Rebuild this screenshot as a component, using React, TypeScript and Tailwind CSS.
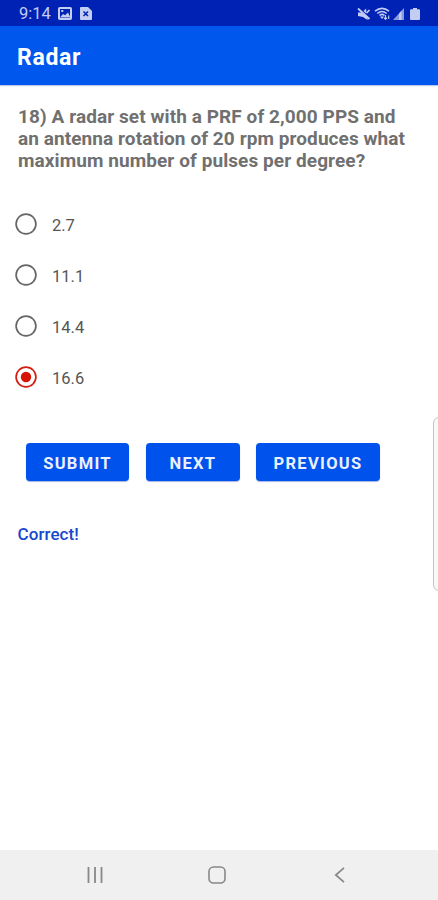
const options = ["2.7", "11.1", "14.4", "16.6"];

function StatusBar() {
  return (
    <div className="flex h-[26px] items-center bg-[#0022b4] pl-[19px] pr-[18px] pt-[1px] text-[#c3cdf3]">
      <span className="w-[39px] text-[16.500px] leading-[26px]">9:14</span>
      <svg className="h-[13px] w-[14px]" viewBox="0 0 14 13" fill="none">
        <rect x="1" y="1" width="12" height="11" rx="0.8" stroke="currentColor" strokeWidth="2" />
        <path d="M2 10.500l3-3.500 2 1.200L10 5.500l2.500 5z" fill="currentColor" />
        <rect x="3.300" y="3" width="2" height="2" fill="currentColor" />
      </svg>
      <svg className="ml-[7.500px] h-[13px] w-[12px]" viewBox="0 0 12 13" fill="none">
        <path d="M1 0h7l4 4v8a1 1 0 0 1-1 1H1a1 1 0 0 1-1-1V1a1 1 0 0 1 1-1z" fill="currentColor" />
        <path d="M3.500 4.500l4.500 4.500M8 4.500L3.500 9" stroke="#0022b4" strokeWidth="1.500" />
      </svg>
      <div className="ml-auto flex items-center">
        <svg className="h-[14px] w-[14px]" viewBox="0 0 14 14" fill="none">
          <path d="M1 5.500h3L10.500 10v3L6 10 1 9z" fill="currentColor" />
          <path d="M6.500 4l2.700-2.500V6.500z" fill="currentColor" />
          <path d="M1 1.500l11.500 10.500M9.500 6L12.500 3" stroke="currentColor" strokeWidth="1.700" />
        </svg>
        <svg className="ml-[3px] h-[14px] w-[17px]" viewBox="0 0 17 14" fill="none" stroke="currentColor">
          <path d="M1 4.200Q8 -1.600 15 4.200M3.300 6.500Q8 2.500 12.700 6.500M5.500 8.500Q8 6.300 10.500 8.500" strokeWidth="1.600" />
          <path d="M6 9.500h4l-2 2.500z" fill="currentColor" stroke="none" />
          <path d="M11.500 8v4M10 10.700l1.500 1.700 1.500-1.700M14.700 12V8.500" strokeWidth="1.100" />
        </svg>
        <svg className="ml-[2px] h-[12px] w-[11px]" viewBox="0 0 11 12">
          <path d="M0 12L11 0v12z" fill="currentColor" opacity="0.700" />
          <path d="M6 12V5.500L8.500 2.700V12z" fill="currentColor" />
        </svg>
        <svg className="ml-[6px] h-[12px] w-[10px]" viewBox="0 0 10 12" fill="currentColor">
          <path d="M3 0h4v1.200h2q1 0 1 1V11q0 1-1 1H1q-1 0-1-1V2.200q0-1 1-1h2z" />
        </svg>
      </div>
    </div>
  );
}

function Option({ label, checked }: { label: string; checked: boolean }) {
  return (
    <label className="flex h-[51px] items-center gap-[15px]">
      <svg className="size-[22px]" viewBox="0 0 22 22" fill="none">
        <circle cx="11" cy="11" r="9.900" stroke={checked ? "#d51b12" : "#666"} strokeWidth="1.700" />
        {checked && <circle cx="11" cy="11" r="5.200" fill="#d81405" />}
      </svg>
      <span className="pt-[3px] text-[16.500px] leading-[22px] text-[#555]">{label}</span>
    </label>
  );
}

const buttonStyle =
  "h-[38px] rounded-[4px] bg-[#0052ec] pt-[4px] text-[16.500px] font-bold tracking-[1.300px] text-[#eaf0ff] shadow-[0_1px_1px_rgba(0,40,180,0.350)]";

export default function App() {
  return (
    <div className="relative flex h-[900px] w-[438px] flex-col overflow-hidden bg-white font-['Roboto','Liberation_Sans',sans-serif]">
      <StatusBar />
      <header className="flex h-[59px] items-center bg-[#0057ee] pl-[17px] pt-[5px] text-[23px] font-bold tracking-[0.700px] text-white shadow-[0_1px_1px_rgba(0,40,160,0.250)]">
        Radar
      </header>
      <main className="flex-1">
        <p className="whitespace-nowrap pl-[18px] pt-[21px] text-[19px] font-bold leading-[22px] tracking-[0.080px] text-[#707070]">
          18) A radar set with a PRF of 2,000 PPS and
          <br />
          an antenna rotation of 20 rpm produces what
          <br />
          maximum number of pulses per degree?
        </p>
        <div className="pl-[15px] pt-[26.500px]">
          {options.map((label) => (
            <Option key={label} label={label} checked={label === "16.6"} />
          ))}
        </div>
        <div className="flex pl-[26px] pt-[40.500px]">
          <button className={`${buttonStyle} w-[103px]`}>SUBMIT</button>
          <button className={`${buttonStyle} ml-[17px] w-[94px]`}>NEXT</button>
          <button className={`${buttonStyle} ml-[16px] w-[124px]`}>PREVIOUS</button>
        </div>
        <p className="pl-[17.500px] pt-[42px] text-[17px] font-medium leading-[22px] tracking-[0.080px] text-[#1748cb]">Correct!</p>
      </main>
      <div className="absolute left-[433px] top-[417px] h-[174px] w-[12px] rounded-[7px] border border-[#c4c4c4] bg-[#f8f8f8]" />
      <nav className="flex h-[50px] items-center bg-[#f0f0f0] text-[#888]">
        <svg className="ml-[87px] h-[16px] w-[16px]" viewBox="0 0 16 16" stroke="currentColor" strokeWidth="1.800">
          <path d="M1.500 0v16M8 0v16M14.500 0v16" />
        </svg>
        <svg className="ml-[105px] h-[18px] w-[18px]" viewBox="0 0 18 18" fill="none" stroke="currentColor" strokeWidth="1.600">
          <rect x="1" y="1" width="16" height="16" rx="4.500" />
        </svg>
        <svg className="ml-[108px] h-[16px] w-[11px]" viewBox="0 0 11 16" fill="none" stroke="currentColor" strokeWidth="1.700">
          <path d="M10 0.800L1.800 8 10 15.200" />
        </svg>
      </nav>
    </div>
  );
}
